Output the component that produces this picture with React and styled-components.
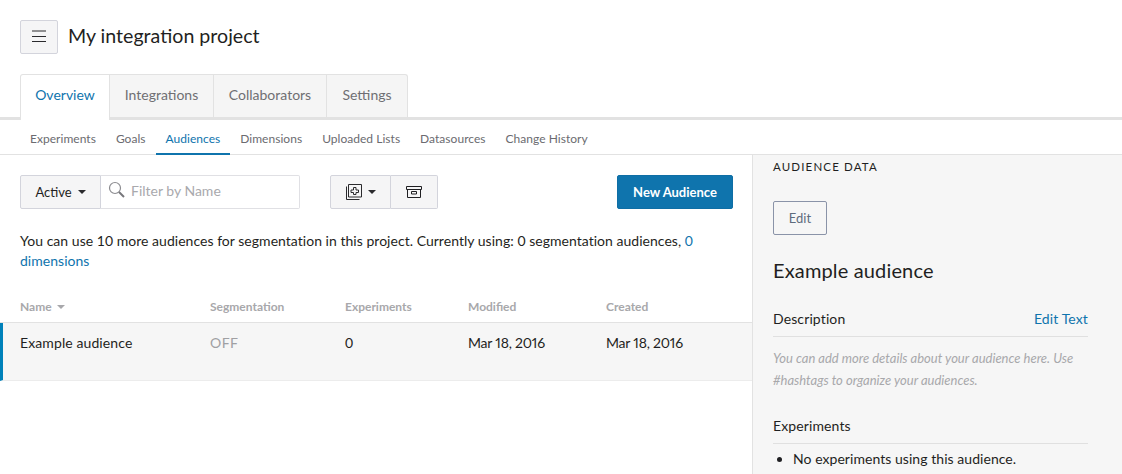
import React from "react";
import styled, { createGlobalStyle } from "styled-components";

const GlobalStyle = createGlobalStyle`
  html, body {
    margin: 0;
    height: 474px;
    overflow: hidden;
    background: #fff;
    font-family: "Lato", "Liberation Sans", sans-serif;
    font-size: 14px;
    color: #1c1c1e;
  }
  * { box-sizing: border-box; }
`;

const Page = styled.div`
  width: 1122px;
  height: 474px;
  overflow: hidden;
`;

const Header = styled.header`
  display: flex;
  align-items: flex-start;
  gap: 10px;
  padding: 20px 20px 0;
  height: 74px;
`;

const MenuButton = styled.button`
  display: flex;
  align-items: center;
  justify-content: center;
  width: 38px;
  height: 34px;
  padding: 0 0 2px;
  background: #f5f5f6;
  border: 1px solid #d3d4dc;
  border-radius: 2px;
`;

const Title = styled.h1`
  margin: 0;
  font-size: 19.6px;
  line-height: 31px;
  font-weight: 400;
  color: #1f1f22;
`;

const Tabs = styled.nav`
  display: flex;
  height: 46px;
  padding-left: 20px;
  border-bottom: 3px solid #e2e2e2;
`;

const Tab = styled.div`
  display: flex;
  align-items: center;
  justify-content: center;
  width: ${(p) => p.$w}px;
  height: ${(p) => (p.$active ? 46 : 43)}px;
  padding-bottom: ${(p) => (p.$active ? 6 : 3)}px;
  font-size: 14px;
  color: ${(p) => (p.$active ? "#0f74ad" : "#6f6f73")};
  background: ${(p) => (p.$active ? "#fff" : "#f5f5f5")};
  border: 1px solid #e2e2e2;
  border-left-width: ${(p) => (p.$active ? 1 : 0)}px;
  border-bottom: 0;
  border-radius: ${(p) => (p.$active ? "3px 0 0 0" : p.$last ? "0 3px 0 0" : 0)};
`;

const SubNav = styled.nav`
  display: flex;
  height: 35px;
  padding-left: 20px;
  border-bottom: 1px solid #e2e2e2;
`;

const SubItem = styled.div`
  height: 35px;
  padding: 0 10px;
  line-height: 38px;
  font-size: 12px;
  letter-spacing: 0.03px;
  color: ${(p) => (p.$active ? "#0f74ad" : "#6b6b70")};
  border-bottom: 2px solid ${(p) => (p.$active ? "#0f74ad" : "transparent")};
`;

const Main = styled.div`
  display: flex;
`;

const Content = styled.section`
  width: 752px;
  flex: none;
`;

const Toolbar = styled.div`
  display: flex;
  align-items: stretch;
  height: 34px;
  margin: 20px 19px 0 20px;
`;

const ToolButton = styled.button`
  display: flex;
  align-items: center;
  justify-content: center;
  gap: 6px;
  width: ${(p) => p.$w}px;
  padding: 0;
  font: inherit;
  font-size: 13px;
  color: #1f1f22;
  background: #f5f5f6;
  border: 1px solid #d3d4dc;
  border-left-width: ${(p) => (p.$joined ? 0 : 1)}px;
  border-radius: ${(p) => p.$radius || "2px"};
`;

const Caret = styled.span`
  width: 0;
  height: 0;
  border-left: 4px solid transparent;
  border-right: 4px solid transparent;
  border-top: 4px solid ${(p) => p.$color || "#2a2a2d"};
`;

const SearchBox = styled.div`
  display: flex;
  align-items: center;
  gap: 5px;
  width: 199px;
  padding: 0 0 4px 7px;
  border: 1px solid #e0e0e4;
  border-left: 0;
  border-radius: 0 2px 2px 0;
  font-size: 14px;
  color: #a9a9ad;
`;

const ButtonGroup = styled.div`
  display: flex;
  margin-left: 30px;
`;

const PrimaryButton = styled.button`
  width: 116px;
  margin-left: auto;
  padding: 0;
  font: inherit;
  font-size: 13px;
  font-weight: 700;
  color: #fff;
  background: #0f74ad;
  border: 1px solid #0f6ea5;
  border-radius: 2px;
`;

const Notice = styled.p`
  width: 700px;
  margin: 22px 0 0 20px;
  font-size: 14px;
  line-height: 20px;
  letter-spacing: 0.03px;
  color: #1f1f22;
`;

const Link = styled.a`
  color: #0f74ad;
`;

const gridColumns = "190px 135px 123px 138px 1fr";

const TableHead = styled.div`
  display: grid;
  grid-template-columns: ${gridColumns};
  height: 52px;
  padding: 28px 0 0 20px;
  font-size: 12px;
  font-weight: 700;
  line-height: 16px;
  color: #a8a8ab;
  border-bottom: 1px solid #e2e2e2;
`;

const HeadCell = styled.div`
  display: flex;
  align-items: center;
  gap: 5px;
  height: 16px;
`;

const TableRow = styled.div`
  display: grid;
  grid-template-columns: ${gridColumns};
  width: 753px;
  height: 58px;
  padding: 10px 0 0 17px;
  background: #f6f6f6;
  border-left: 3px solid #0081ba;
  border-bottom: 1px solid #ececec;
  font-size: 14px;
  line-height: 20px;
  letter-spacing: 0.1px;
  color: #1f1f22;
`;

const Off = styled.div`
  letter-spacing: 0.5px;
  color: #a0a0a3;
`;

const DateCell = styled.div`
  font-variant-numeric: proportional-nums;
  letter-spacing: -0.2px;
`;

const Sidebar = styled.aside`
  width: 370px;
  height: 319px;
  padding: 0 34px 0 20px;
  background: #f6f6f6;
  border-left: 1px solid #e2e2e2;
  color: #1f1f22;
`;

const SideLabel = styled.div`
  margin-top: 4px;
  font-size: 11.5px;
  line-height: 16px;
  letter-spacing: 1.15px;
  color: #1f1f22;
`;

const EditButton = styled.button`
  display: block;
  width: 54px;
  height: 34px;
  margin-top: 26px;
  padding: 0;
  font: inherit;
  font-size: 13px;
  color: #5e6b7d;
  background: transparent;
  border: 1px solid #8a93a8;
  border-radius: 2px;
`;

const Heading = styled.h2`
  margin: 22px 0 0;
  font-size: 20px;
  line-height: 26px;
  font-weight: 400;
  letter-spacing: 0.15px;
`;

const SectionHead = styled.div`
  display: flex;
  justify-content: space-between;
  height: 27px;
  margin-top: ${(p) => p.$top}px;
  font-size: 14px;
  line-height: 18px;
  letter-spacing: 0.12px;
  border-bottom: 1px solid #e0e0e0;
`;

const Hint = styled.p`
  margin: 10px 0 0;
  font-size: 13px;
  font-style: italic;
  line-height: 22px;
  color: #a8a8ab;
`;

const BulletList = styled.ul`
  margin: 5px 0 0;
  padding-left: 20px;
  font-size: 14px;
  line-height: 20px;
  letter-spacing: 0.05px;
`;

const MenuIcon = () => (
  <svg width="14" height="12" viewBox="0 0 14 12" fill="none" stroke="#2a2a2d" strokeWidth="1">
    <path d="M0 1h14M0 6.5h14M0 11.5h14" />
  </svg>
);

const SearchIcon = () => (
  <svg width="18" height="18" viewBox="0 0 18 18" fill="none">
    <circle cx="7" cy="7" r="5.5" stroke="#8c8c90" strokeWidth="1.2" />
    <path d="M11 11l5 5" stroke="#77777b" strokeWidth="2" />
  </svg>
);

const AddIcon = () => (
  <svg width="16" height="16" viewBox="0 0 16 16" fill="none" stroke="#2a2a2d" strokeWidth="1">
    <path d="M0.5 2.5v13h13" />
    <path d="M2.5 0.5h13v12.5h-13z" />
    <path d="M7.5 3.5h2.5v2.5h2.5v2.5h-2.5v2h-2.5v-2h-2.5v-2.5h2.5z" />
  </svg>
);

const ArchiveIcon = () => (
  <svg width="16" height="12" viewBox="0 0 16 12" fill="none" stroke="#1f1f22" strokeWidth="1">
    <path d="M0.5 0.5h15v3h-15z" />
    <path d="M1.5 3.5v8h13v-8" />
    <path d="M5.5 5.5h5v2.5h-5z" />
  </svg>
);

const tabs = [
  { label: "Overview", w: 90, active: true },
  { label: "Integrations", w: 104 },
  { label: "Collaborators", w: 113 },
  { label: "Settings", w: 81, last: true },
];

const subItems = ["Experiments", "Goals", "Audiences", "Dimensions", "Uploaded Lists", "Datasources", "Change History"];

export default function App() {
  return (
    <Page>
      <GlobalStyle />
      <Header>
        <MenuButton>
          <MenuIcon />
        </MenuButton>
        <Title>My integration project</Title>
      </Header>
      <Tabs>
        {tabs.map((t) => (
          <Tab key={t.label} $w={t.w} $active={t.active} $last={t.last}>
            {t.label}
          </Tab>
        ))}
      </Tabs>
      <SubNav>
        {subItems.map((s) => (
          <SubItem key={s} $active={s === "Audiences"}>
            {s}
          </SubItem>
        ))}
      </SubNav>
      <Main>
        <Content>
          <Toolbar>
            <ToolButton $w={81} $radius="2px 0 0 2px">
              Active <Caret />
            </ToolButton>
            <SearchBox>
              <SearchIcon />
              Filter by Name
            </SearchBox>
            <ButtonGroup>
              <ToolButton $w={61} $radius="2px 0 0 2px">
                <AddIcon /> <Caret />
              </ToolButton>
              <ToolButton $w={47} $joined $radius="0 2px 2px 0">
                <ArchiveIcon />
              </ToolButton>
            </ButtonGroup>
            <PrimaryButton>New Audience</PrimaryButton>
          </Toolbar>
          <Notice>
            You can use 10 more audiences for segmentation in this project. Currently using: 0 segmentation audiences,{" "}
            <Link>0 dimensions</Link>
          </Notice>
          <TableHead>
            <HeadCell>
              Name <Caret $color="#a8a8ab" />
            </HeadCell>
            <HeadCell>Segmentation</HeadCell>
            <HeadCell>Experiments</HeadCell>
            <HeadCell>Modified</HeadCell>
            <HeadCell>Created</HeadCell>
          </TableHead>
          <TableRow>
            <div>Example audience</div>
            <Off>OFF</Off>
            <div>0</div>
            <DateCell>Mar 18, 2016</DateCell>
            <DateCell>Mar 18, 2016</DateCell>
          </TableRow>
        </Content>
        <Sidebar>
          <SideLabel>AUDIENCE DATA</SideLabel>
          <EditButton>Edit</EditButton>
          <Heading>Example audience</Heading>
          <SectionHead $top={27}>
            <span>Description</span>
            <Link>Edit Text</Link>
          </SectionHead>
          <Hint>You can add more details about your audience here. Use #hashtags to organize your audiences.</Hint>
          <SectionHead $top={26}>
            <span>Experiments</span>
          </SectionHead>
          <BulletList>
            <li>No experiments using this audience.</li>
          </BulletList>
        </Sidebar>
      </Main>
    </Page>
  );
}
